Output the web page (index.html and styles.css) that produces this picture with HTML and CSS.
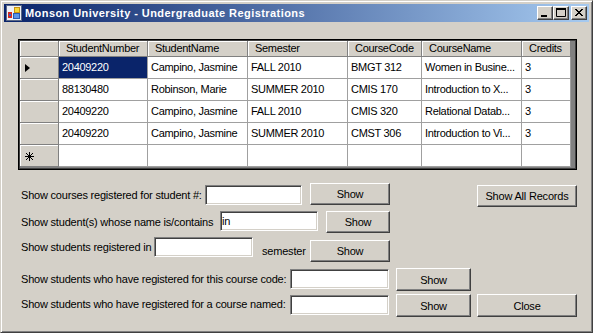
FILE: index.html
```html
<!DOCTYPE html>
<html lang="en">
<head>
  <meta charset="UTF-8" />
  <meta name="viewport" content="width=device-width, initial-scale=1.0" />
  <title>Monson University - Undergraduate Registrations</title>
  <link rel="stylesheet" href="styles.css">
</head>
<body>
<div class="window">
  <div class="titlebar">
    <svg class="titlebar__icon" width="16" height="16" viewBox="0 0 16 16">
      <rect x="0.5" y="0.5" width="15" height="15" fill="#eef0f6" stroke="#5a6886" />
      <rect x="8.5" y="2.5" width="5" height="5" fill="#f8d838" stroke="#c89010" />
      <rect x="2" y="7" width="4" height="6" fill="#d42a20" />
      <rect x="3" y="9" width="2" height="2" fill="#2c5ccc" />
      <rect x="7.5" y="8.5" width="6" height="5" fill="#5c94e8" stroke="#2a58b4" />
    </svg>
    <span class="titlebar__text">Monson University - Undergraduate Registrations</span>
    <div class="titlebar__buttons">
      <span class="cap-btn">
        <svg width="14" height="12" viewBox="0 0 14 12"><rect x="3" y="8" width="6" height="2" fill="#000" /></svg>
      </span>
      <span class="cap-btn">
        <svg width="14" height="12" viewBox="0 0 14 12"><path d="M2.5 1.5h9v8h-9z" fill="none" stroke="#000" /><rect x="2" y="1" width="10" height="2" fill="#000" /></svg>
      </span>
      <span class="cap-btn cap-btn--close">
        <svg width="14" height="12" viewBox="0 0 14 12" shape-rendering="crispEdges"><path d="M3 2l7 7M4 2l7 7M10 2l-7 7M11 2l-7 7" stroke="#000" fill="none" /></svg>
      </span>
    </div>
  </div>

  <div class="client">
    <div class="grid">
      <div class="grid__cells">
        <div class="hd hd--corner"></div>
        <div class="hd">StudentNumber</div>
        <div class="hd">StudentName</div>
        <div class="hd">Semester</div>
        <div class="hd">CourseCode</div>
        <div class="hd">CourseName</div>
        <div class="hd">Credits</div>

        <div class="rh"><span class="rh__arrow"></span></div>
        <div class="cell cell--selected">20409220</div>
        <div class="cell">Campino, Jasmine</div>
        <div class="cell">FALL 2010</div>
        <div class="cell">BMGT 312</div>
        <div class="cell">Women in Busine...</div>
        <div class="cell">3</div>

        <div class="rh"></div>
        <div class="cell">88130480</div>
        <div class="cell">Robinson, Marie</div>
        <div class="cell">SUMMER 2010</div>
        <div class="cell">CMIS 170</div>
        <div class="cell">Introduction to X...</div>
        <div class="cell">3</div>

        <div class="rh"></div>
        <div class="cell">20409220</div>
        <div class="cell">Campino, Jasmine</div>
        <div class="cell">FALL 2010</div>
        <div class="cell">CMIS 320</div>
        <div class="cell">Relational Datab...</div>
        <div class="cell">3</div>

        <div class="rh"></div>
        <div class="cell">20409220</div>
        <div class="cell">Campino, Jasmine</div>
        <div class="cell">SUMMER 2010</div>
        <div class="cell">CMST 306</div>
        <div class="cell">Introduction to Vi...</div>
        <div class="cell">3</div>

        <div class="rh">
          <svg class="rh__star" width="9" height="9" viewBox="0 0 9 9" shape-rendering="crispEdges">
            <path d="M4.5 0v9M0 4.5h9M1 1l7 7M8 1l-7 7" stroke="#000" fill="none" />
          </svg>
        </div>
        <div class="cell"></div>
        <div class="cell"></div>
        <div class="cell"></div>
        <div class="cell"></div>
        <div class="cell"></div>
        <div class="cell"></div>
      </div>
    </div>

    <div class="filters">
      <div class="filter filter--number">
        <label class="filter__label" for="student-number">Show courses registered for student #:</label>
        <input class="textbox" type="text" id="student-number" />
        <button class="btn btn--show">Show</button>
        <button class="btn btn--all">Show All Records</button>
      </div>
      <div class="filter filter--name">
        <label class="filter__label" for="student-name">Show student(s) whose name is/contains</label>
        <input class="textbox" type="text" id="student-name" value="in" />
        <button class="btn btn--show">Show</button>
      </div>
      <div class="filter filter--semester">
        <label class="filter__label" for="semester">Show students registered in</label>
        <input class="textbox" type="text" id="semester" />
        <span class="filter__after">semester</span>
        <button class="btn btn--show">Show</button>
      </div>
      <div class="filter filter--code">
        <label class="filter__label" for="course-code">Show students who have registered for this course code:</label>
        <input class="textbox" type="text" id="course-code" />
        <button class="btn btn--show">Show</button>
      </div>
      <div class="filter filter--course">
        <label class="filter__label" for="course-name">Show students who have registered for a course named:</label>
        <input class="textbox" type="text" id="course-name" />
        <button class="btn btn--show">Show</button>
        <button class="btn btn--close">Close</button>
      </div>
    </div>

    <svg class="grip" width="12" height="12" viewBox="0 0 12 12" shape-rendering="crispEdges">
      <path d="M11 0L0 11M11 4L4 11M11 8L8 11" stroke="#fff" fill="none" />
      <path d="M12 0L0 12M12 1L1 12M12 4L4 12M12 5L5 12M12 8L8 12M12 9L9 12" stroke="#808080" fill="none" />
    </svg>
  </div>
</div>
</body>
</html>
```

FILE: styles.css
```css
* {
  box-sizing: border-box;
}
html, body {
  margin: 0;
  padding: 0;
}
body {
  font-family: "Liberation Sans", Arial, sans-serif;
  font-size: 11px;
  letter-spacing: -0.2px;
  color: #000;
  background: #d4d0c8;
}
.window {
  width: 593px;
  height: 333px;
  padding: 3px;
  background: #d4d0c8;
  border: 1px solid;
  border-color: #d4d0c8 #404040 #404040 #d4d0c8;
  box-shadow: inset 1px 1px #fff, inset -1px -1px #808080;
}

/* title bar */
.titlebar {
  height: 18px;
  display: flex;
  align-items: flex-start;
  background: linear-gradient(to right, #0a246a, #a6caf0);
  color: #fff;
}
.titlebar__icon {
  margin: 1px 0 0 2px;
  flex: none;
}
.titlebar__text {
  margin-left: 3px;
  font-weight: bold;
  letter-spacing: 0.43px;
  line-height: 18px;
  white-space: nowrap;
}
.titlebar__buttons {
  display: flex;
  margin: 2px 2px 0 auto;
}
.cap-btn {
  width: 16px;
  height: 14px;
  background: #d4d0c8;
  border: 1px solid;
  border-color: #fff #404040 #404040 #fff;
  box-shadow: inset -1px -1px #808080;
  display: flex;
}
.cap-btn svg {
  display: block;
}
.cap-btn--close {
  margin-left: 2px;
}

/* client area */
.client {
  position: relative;
  height: 307px;
}

/* data grid */
.grid {
  margin: 17px 0 0 14px;
  width: 559px;
  height: 131px;
  padding: 1px;
  background: #808080;
  border: 1px solid #000;
  box-shadow: inset 1px 1px #404040, inset -1px -1px #404040;
  letter-spacing: -0.3px;
}
.grid__cells {
  display: grid;
  grid-template-columns: 39px 89px 100px 100px 74px 100px 49px;
  grid-template-rows: 16px repeat(5, 22px);
}
.hd {
  background: #d4d0c8;
  border-right: 1px solid #808080;
  border-bottom: 1px solid #808080;
  box-shadow: inset 1px 1px #fff;
  padding-left: 7px;
  line-height: 15px;
  white-space: nowrap;
  overflow: hidden;
}
.cell {
  background: #fff;
  border-right: 1px solid #a0a0a0;
  border-bottom: 1px solid #a0a0a0;
  padding-left: 3px;
  line-height: 21px;
  white-space: nowrap;
  overflow: hidden;
}
.cell--selected {
  background: #0a246a;
  color: #fff;
}
.rh {
  background: #d4d0c8;
  border-right: 1px solid #808080;
  border-bottom: 1px solid #808080;
  box-shadow: inset 1px 1px #fff;
  display: flex;
  align-items: center;
  padding-left: 5px;
}
.rh__arrow {
  width: 0;
  height: 0;
  border-left: 5px solid #000;
  border-top: 4px solid transparent;
  border-bottom: 4px solid transparent;
  margin-top: 1px;
}
.rh__star {
  display: block;
  margin-top: 1px;
}

/* filters */
.filters {
  margin-top: 13px;
  padding-left: 17px;
}
.filter {
  display: flex;
  align-items: flex-start;
}
.filter__label {
  flex: none;
  line-height: 13px;
  white-space: nowrap;
}
.filter__after {
  flex: none;
  width: 48px;
  margin: 8px 0 0 9px;
  line-height: 13px;
}
.textbox {
  flex: none;
  height: 20px;
  width: 99px;
  margin: 0;
  padding: 0 1px;
  font: inherit;
  letter-spacing: inherit;
  background: #fff;
  border: 1px solid;
  border-color: #808080 #fff #fff #808080;
  box-shadow: inset 1px 1px #404040, inset -1px -1px #d4d0c8;
  outline: none;
}
.btn {
  flex: none;
  margin: 0;
  padding: 0;
  height: 22px;
  font: inherit;
  letter-spacing: inherit;
  color: #000;
  background: #d4d0c8;
  border: 1px solid;
  border-color: #fff #404040 #404040 #fff;
  box-shadow: inset -1px -1px #808080;
}

.filter--number {
  height: 26px;
}
.filter--number .filter__label {
  width: 184px;
  margin-top: 6px;
}
.filter--number .textbox {
  width: 97px;
  margin-top: 2px;
}
.filter--number .btn--show {
  width: 80px;
  margin-left: 8px;
}
.filter--number .btn--all {
  width: 100px;
  margin: 2px 0 0 87px;
}

.filter--name {
  height: 28px;
}
.filter--name .filter__label {
  width: 199px;
  margin-top: 7px;
}
.filter--name .textbox {
  width: 98px;
  margin-top: 2px;
}
.filter--name .btn--show {
  width: 64px;
  margin: 2px 0 0 8px;
}

.filter--semester {
  height: 31px;
}
.filter--semester .filter__label {
  width: 133px;
  margin-top: 4px;
}
.filter--semester .btn--show {
  width: 80px;
  margin-top: 3px;
}

.filter--code {
  height: 26px;
}
.filter--code .filter__label,
.filter--course .filter__label {
  width: 269px;
}
.filter--code .filter__label {
  margin-top: 5px;
}
.filter--code .textbox,
.filter--course .textbox {
  margin-top: 1px;
}
.filter--code .btn,
.filter--course .btn {
  height: 23px;
}
.filter--code .btn--show,
.filter--course .btn--show {
  width: 75px;
  margin-left: 7px;
}

.filter--course .filter__label {
  margin-top: 4px;
}
.btn--close {
  width: 100px;
  margin-left: 6px;
}

.grip {
  position: absolute;
  right: 1px;
  bottom: 1px;
}
```
